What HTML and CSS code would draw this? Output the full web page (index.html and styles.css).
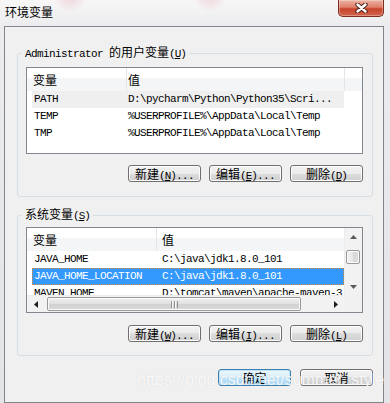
FILE: index.html
```html
<!DOCTYPE html>
<html>
    <head>
        <meta charset="UTF-8" />
        <title>环境变量</title>
        <link rel="stylesheet" href="styles.css">
    </head>
    <body>
        <div class="window">
            <div class="titlebar">
                <span class="title">环境变量</span>
                <button class="close" aria-label="关闭">
                    <svg width="15" height="10" viewBox="0 0 15 10">
                        <path d="M3.5 1.5 L11.5 8.5 M11.5 1.5 L3.5 8.5" stroke="#4b2119" stroke-width="4.4" stroke-linecap="round" fill="none" />
                        <path d="M3.5 1.5 L11.5 8.5 M11.5 1.5 L3.5 8.5" stroke="#fff" stroke-width="2.4" stroke-linecap="round" fill="none" />
                    </svg>
                </button>
            </div>

            <div class="client">
                <fieldset class="group group-user">
                    <legend><span>Administrator </span><span class="zh">的用户变量</span><span class="key">(<u>U</u>)</span></legend>
                    <div class="list list-user">
                        <div class="head">
                            <span class="h-name"><span class="zh">变量</span></span>
                            <span class="h-value"><span class="zh">值</span></span>
                            <span class="h-rest"></span>
                        </div>
                        <div class="row inactive">
                            <span class="c-name">PATH</span>
                            <span class="c-value">D:\pycharm\Python\Python35\Scri...</span>
                        </div>
                        <div class="row">
                            <span class="c-name">TEMP</span>
                            <span class="c-value">%USERPROFILE%\AppData\Local\Temp</span>
                        </div>
                        <div class="row">
                            <span class="c-name">TMP</span>
                            <span class="c-value">%USERPROFILE%\AppData\Local\Temp</span>
                        </div>
                    </div>
                    <div class="buttons">
                        <button class="btn"><span class="zh">新建</span><span class="key">(<u>N</u>)</span>...</button>
                        <button class="btn"><span class="zh">编辑</span><span class="key">(<u>E</u>)</span>...</button>
                        <button class="btn"><span class="zh">删除</span><span class="key">(<u>D</u>)</span></button>
                    </div>
                </fieldset>

                <fieldset class="group group-sys">
                    <legend><span class="zh">系统变量</span><span class="key">(<u>S</u>)</span></legend>
                    <div class="list list-sys">
                        <div class="viewport">
                            <div class="head">
                                <span class="h-name"><span class="zh">变量</span></span>
                                <span class="h-value"><span class="zh">值</span></span>
                            </div>
                            <div class="row">
                                <span class="c-name">JAVA_HOME</span>
                                <span class="c-value">C:\java\jdk1.8.0_101</span>
                            </div>
                            <div class="row selected">
                                <span class="c-name">JAVA_HOME_LOCATION</span>
                                <span class="c-value">C:\java\jdk1.8.0_101</span>
                            </div>
                            <div class="row">
                                <span class="c-name">MAVEN_HOME</span>
                                <span class="c-value">D:\tomcat\maven\apache-maven-3.5.0</span>
                            </div>
                        </div>
                        <div class="vscroll">
                            <span class="sb-btn">
                                <svg width="7" height="4" viewBox="0 0 7 4"><polygon points="3.5,0 7,4 0,4" fill="#5a5a5a" /></svg>
                            </span>
                            <span class="sb-gap"></span>
                            <span class="thumb thumb-v"></span>
                            <span class="sb-track"></span>
                            <span class="sb-btn">
                                <svg width="7" height="4" viewBox="0 0 7 4"><polygon points="0,0 7,0 3.5,4" fill="#5a5a5a" /></svg>
                            </span>
                        </div>
                        <div class="hscroll">
                            <span class="sb-btn">
                                <svg width="4" height="7" viewBox="0 0 4 7"><polygon points="4,0 4,7 0,3.5" fill="#202020" /></svg>
                            </span>
                            <span class="sb-gap"></span>
                            <span class="thumb thumb-h"><span class="grip"></span></span>
                            <span class="sb-track"></span>
                            <span class="sb-btn">
                                <svg width="4" height="7" viewBox="0 0 4 7"><polygon points="0,0 4,3.5 0,7" fill="#202020" /></svg>
                            </span>
                        </div>
                        <div class="corner"></div>
                    </div>
                    <div class="buttons">
                        <button class="btn"><span class="zh">新建</span><span class="key">(<u>W</u>)</span>...</button>
                        <button class="btn"><span class="zh">编辑</span><span class="key">(<u>I</u>)</span>...</button>
                        <button class="btn"><span class="zh">删除</span><span class="key">(<u>L</u>)</span></button>
                    </div>
                </fieldset>

                <div class="footer">
                    <button class="btn btn-default"><span class="zh">确定</span></button>
                    <button class="btn"><span class="zh">取消</span></button>
                </div>
            </div>

            <div class="watermark">https://blog.csdn.net/summer_style</div>
        </div>
    </body>
</html>
```

FILE: styles.css
```css
body {
    margin: 0;
    color: #000;
    font-family: "Liberation Mono", "Noto Sans CJK SC", monospace;
    font-size: 11px;
    letter-spacing: -0.6px;
}

.zh {
    font-family: "Noto Sans CJK SC", sans-serif;
    font-size: 12px;
    letter-spacing: 0;
}

.key {
    letter-spacing: -1px;
}

.key u {
    text-underline-offset: 1px;
}

/* Window frame (Aero glass) */
.window {
    position: relative;
    width: 390px;
    height: 403px;
    box-sizing: border-box;
    padding: 0 6px 0 4px;
    overflow: hidden;
    background:
        radial-gradient(circle at 70px -6px, rgba(230, 170, 180, 0.55), transparent 18px),
        radial-gradient(circle at 210px -6px, rgba(230, 170, 180, 0.5), transparent 18px),
        linear-gradient(#f7f7f8, #ececee 26px, #e2e4e6);
}

.titlebar {
    display: flex;
    justify-content: space-between;
    align-items: flex-start;
    height: 26px;
}

.title {
    margin: 5px 0 0 1px;
    font-family: "Noto Sans CJK SC", sans-serif;
    font-size: 12px;
    line-height: 14px;
    letter-spacing: 0;
}

.close {
    display: flex;
    align-items: center;
    justify-content: center;
    width: 46px;
    height: 17px;
    padding: 0;
    border: 1px solid #7e2c20;
    border-top: none;
    border-radius: 0 0 5px 5px;
    background: linear-gradient(#eab3a4, #de7f69 45%, #c8442c 55%, #d3644d);
    box-shadow: inset 0 0 0 1px rgba(255, 255, 255, 0.3);
}

.client {
    border: 1px solid #80858b;
    background: #f0f0f0;
    padding-bottom: 16px;
}

/* Group boxes */
.group {
    margin: 18px 10px 0 12px;
    padding: 0 9px 14px 8px;
    border: 1px solid #d5dfe5;
    border-radius: 3px;
}

.group-sys {
    margin-top: 10px;
    padding-bottom: 13px;
}

.group legend {
    margin-left: -4px;
    padding: 0 3px;
    line-height: 14px;
}

.group legend .zh {
    line-height: 14px;
}

/* List views */
.list {
    box-sizing: border-box;
    border: 1px solid #828790;
    background: #fff;
    line-height: 17px;
    overflow: hidden;
}

.list-user {
    height: 87px;
    margin-top: 6px;
}

.list-sys {
    display: grid;
    grid-template-columns: 1fr 18px;
    grid-template-rows: 1fr 17px;
    height: 86px;
    margin-top: 4px;
}

.viewport {
    overflow: hidden;
}

.head {
    display: flex;
    height: 23px;
    line-height: 23px;
    background: linear-gradient(#fff 10px, #f4f5f7 10px);
    white-space: nowrap;
}

.head .zh {
    line-height: 23px;
}

.head span {
    box-sizing: border-box;
}

.h-name {
    border-right: 1px solid #e3e5e8;
    padding-left: 6px;
}

.h-value {
    padding-left: 1px;
}

.list-user .h-name {
    width: 100px;
}

.list-user .h-value {
    width: 218px;
    border-right: 1px solid #e3e5e8;
}

.h-rest {
    flex: 1;
}

.list-sys .h-name {
    width: 130px;
}

.list-sys .h-value {
    flex: 1;
    padding-left: 5px;
}

.row {
    display: flex;
    height: 17px;
    margin-left: 5px;
    white-space: nowrap;
}

.row span {
    box-sizing: border-box;
    flex-shrink: 0;
}

.c-name {
    padding-left: 2px;
}

.list-user .row {
    width: 312px;
}

.list-user .c-name {
    width: 95px;
}

.list-user .c-value {
    width: 217px;
    padding-left: 1px;
    overflow: hidden;
}

.list-sys .c-name {
    width: 125px;
}

.list-sys .c-value {
    padding-left: 5px;
}

.row.inactive {
    background: #efefef;
}

.row.selected {
    background: #3399ff;
    color: #fff;
    outline: 1px dotted #d98b3a;
    outline-offset: -1px;
}

/* Scroll bars */
.vscroll,
.hscroll {
    display: flex;
    background: #f2f2f2;
}

.vscroll {
    flex-direction: column;
    border-left: 1px solid #ececec;
}

.hscroll {
    border-top: 1px solid #ececec;
}

.sb-btn {
    display: flex;
    align-items: center;
    justify-content: center;
    flex: 0 0 17px;
}

.vscroll .sb-gap {
    flex: 0 0 5px;
}

.hscroll .sb-gap {
    flex: 0 0 3px;
}

.sb-track {
    flex: 1;
}

.thumb {
    box-sizing: border-box;
    border: 1px solid #999;
    border-radius: 2px;
    box-shadow: inset 0 0 0 1px #fbfbfb;
}

.thumb-v {
    flex: 0 0 14px;
    margin: 0 2px 0 1px;
    background: linear-gradient(to right, #f4f4f4, #e6e6e6 50%, #d8d8d8 50%, #dedede);
}

.thumb-h {
    display: flex;
    align-items: center;
    justify-content: center;
    flex: 0 0 254px;
    margin: 1px 0;
    background: linear-gradient(#f0f0f0, #e0e0e0 50%, #d2d2d2 50%, #d8d8d8);
}

.grip {
    width: 7px;
    height: 7px;
    background: repeating-linear-gradient(to right, #8d8d8d 0 1px, #fafafa 1px 2px, transparent 2px 3px);
}

.corner {
    background: #f0f0f0;
}

/* Buttons */
.buttons,
.footer {
    display: flex;
    justify-content: flex-end;
}

.buttons {
    gap: 8px;
    margin-top: 12px;
}

.group-user .buttons {
    margin-top: 11px;
}

.footer {
    gap: 9px;
    margin: 13px 10px 0 0;
}

.btn {
    box-sizing: border-box;
    width: 73px;
    height: 17px;
    padding: 0;
    border: 1px solid #707070;
    border-radius: 3px;
    background: linear-gradient(#f2f2f2, #ebebeb 50%, #dddddd 50%, #cfcfcf);
    box-shadow: inset 0 0 0 1px #fcfcfc;
    color: #000;
    font-family: inherit;
    font-size: 11px;
    letter-spacing: -0.6px;
    line-height: 15px;
}

.btn .zh {
    line-height: 15px;
}

.btn-default {
    border-color: #3c7fb1;
    background: linear-gradient(#eaf6fd, #d9f0fc 50%, #bee6fd 50%, #a7d9f5);
    box-shadow: inset 0 0 0 1px #c4e5f6;
}

/* Image-host watermark stamped over the dialog */
.watermark {
    position: absolute;
    left: 137px;
    top: 371px;
    font-family: "Liberation Sans", sans-serif;
    font-size: 16px;
    letter-spacing: 0;
    color: rgba(255, 255, 255, 0.85);
    text-shadow: 0 0 1px rgba(160, 160, 160, 0.35);
    pointer-events: none;
}
```
